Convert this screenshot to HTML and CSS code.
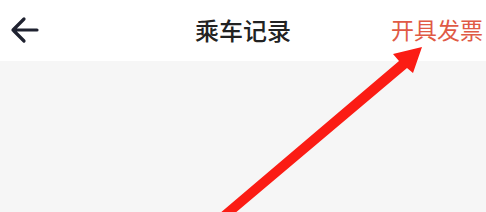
FILE: index.html
```html
<!DOCTYPE html>
<html lang="zh-CN">
<head>
    <meta charset="UTF-8">
    <meta name="viewport" content="width=device-width, initial-scale=1.0">
    <title>乘车记录</title>
    <link rel="stylesheet" href="styles.css">
</head>
<body>
    <div class="page">
        <div class="navbar">
            <a class="back" href="#">
                <svg width="30" height="28" viewBox="0 0 30 28">
                    <path d="M27 14H3M14 3L3 14L14 25" fill="none" stroke="#1f2230" stroke-width="3.2" stroke-linecap="round" stroke-linejoin="round"/>
                </svg>
            </a>
            <div class="title">乘车记录</div>
            <a class="invoice" href="#">开具发票</a>
        </div>
        <div class="content"></div>

        <svg class="pointer" width="486" height="212" viewBox="0 0 486 212">
            <polygon points="422,47 393,54 399,61 219,214 234,214 407,68 413,73" fill="#fb1c14"/>
        </svg>
    </div>
</body>
</html>
```

FILE: styles.css
```css
body {
    margin: 0;
    font-family: "Noto Sans CJK SC", "Noto Sans", sans-serif;
    background-color: #f6f6f6;
}
.page {
    position: relative;
    width: 486px;
    height: 212px;
    overflow: hidden;
    display: flex;
    flex-direction: column;
}
.navbar {
    height: 61px;
    background-color: #fff;
    display: grid;
    grid-template-columns: 1fr auto 1fr;
    align-items: center;
}
.back {
    display: flex;
    align-items: center;
    padding-left: 10px;
    padding-bottom: 1px;
}
.title {
    font-size: 24px;
    font-weight: 500;
    color: #222;
    line-height: 1;
    padding-bottom: 1px;
}
.invoice {
    justify-self: end;
    padding-right: 3px;
    font-size: 23px;
    line-height: 1;
    color: #e05a45;
    text-decoration: none;
    padding-bottom: 2px;
}
.content {
    flex: 1;
    background-color: #f6f6f6;
}
.pointer {
    position: absolute;
    left: 0;
    top: 0;
}
```
